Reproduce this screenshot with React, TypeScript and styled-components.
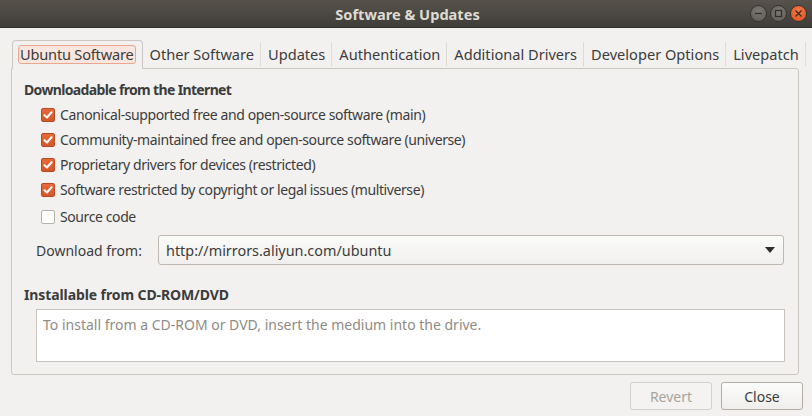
import React from "react";
import styled, { createGlobalStyle, css } from "styled-components";

const Global = createGlobalStyle`
  html, body { margin: 0; padding: 0; background: #f2f1f0; }
  body { font-family: "Noto Sans", "Open Sans", sans-serif; font-size: 14px; color: #3c3c3c; }
  * { box-sizing: border-box; }
`;

const Window = styled.div`
  width: 812px;
  height: 416px;
  display: flex;
  flex-direction: column;
  background: #f2f1f0;
  overflow: hidden;
`;

const TitleBar = styled.div`
  height: 28px;
  flex: none;
  position: relative;
  display: flex;
  align-items: center;
  justify-content: center;
  background: linear-gradient(#57534c, #3f3d38);
  border-bottom: 1px solid #2f2e2a;
`;

const Title = styled.div`
  color: #dfdbd2;
  font-weight: bold;
  font-size: 14.6px;
  margin-left: 3px;
`;

const WinButtons = styled.div`
  position: absolute;
  right: 5px;
  top: 5px;
  display: flex;
  gap: 3px;
`;

const WinBtn = styled.div<{ $close?: boolean }>`
  width: 17px;
  height: 17px;
  border-radius: 50%;
  display: flex;
  align-items: center;
  justify-content: center;
  border: 1px solid #35332f;
  background: ${(p) =>
    p.$close
      ? "radial-gradient(circle at 50% 35%, #f37a4a, #e14f1c)"
      : "radial-gradient(circle at 50% 35%, #7c7871, #5d5a54)"};
`;

const Body = styled.div`
  flex: 1;
  display: flex;
  flex-direction: column;
  padding: 12px 12px 6px 11px;
`;

const TabStrip = styled.div`
  display: flex;
  height: 28px;
  margin-left: 1px;
  align-items: stretch;
  font-size: 14.6px;
`;

const Tab = styled.div<{ $active?: boolean }>`
  display: flex;
  align-items: center;
  padding: 0 7px;
  white-space: nowrap;
  color: #3c3c3c;
  position: relative;
  ${(p) =>
    p.$active
      ? css`
          border: 1px solid #cdc7c2;
          border-bottom: none;
          border-radius: 4px 4px 0 0;
          background: #f2f1f0;
          margin-bottom: -1px;
          padding: 0 6px 1px 5px;
          z-index: 1;
        `
      : css`
          &::after {
            content: "";
            position: absolute;
            right: 0;
            top: 2px;
            bottom: 2px;
            width: 1px;
            background: #dedad6;
          }
        `}
`;

const Focus = styled.span`
  border: 1px solid #eba68e;
  background: #f8e6df;
  border-radius: 3px;
  padding: 0 1px 1px 1px;
  line-height: 16px;
  letter-spacing: -0.2px;
`;

const Notebook = styled.div`
  flex: none;
  height: 307px;
  width: 788px;
  border: 1px solid #cdc7c2;
  border-radius: 0 3px 3px 3px;
  display: flex;
  flex-direction: column;
  padding: 9px 12px 12px 12px;
`;

const Heading = styled.div<{ $tight?: boolean }>`
  font-weight: bold;
  height: 24px;
  display: flex;
  align-items: center;
  color: #3c3c3c;
  letter-spacing: ${(p) => (p.$tight ? "-0.65px" : "-0.1px")};
`;

const CheckList = styled.div`
  display: flex;
  flex-direction: column;
  padding-left: 17px;
  padding-top: 1px;
`;

const CheckRow = styled.label<{ $last?: boolean }>`
  display: flex;
  align-items: center;
  gap: 5px;
  height: 25px;
  letter-spacing: -0.4px;
  ${(p) =>
    p.$last &&
    css`
      height: 27px;
      padding-top: 2px;
    `}
`;

const Box = styled.span<{ $on?: boolean }>`
  width: 14px;
  height: 14px;
  border-radius: 2px;
  display: flex;
  align-items: center;
  justify-content: center;
  flex: none;
  ${(p) =>
    p.$on
      ? css`
          background: linear-gradient(#e66a3a, #d4572a);
          border: 1px solid #b8481f;
        `
      : css`
          background: #fff;
          border: 1px solid #b6b0a9;
        `}
`;

const DownloadRow = styled.div`
  display: flex;
  align-items: center;
  margin-top: 6px;
  padding-left: 12px;
  height: 30px;
  gap: 12px;
`;

const Label = styled.span`
  width: 110px;
  flex: none;
`;

const Combo = styled.div`
  flex: 1;
  height: 30px;
  border: 1px solid #bfb8b1;
  border-radius: 3px;
  background: linear-gradient(#fbfbfa, #f0efee);
  display: flex;
  align-items: center;
  justify-content: space-between;
  padding: 0 8px 0 7px;
  margin-right: 2px;
  font-size: 14.4px;
`;

const Heading2 = styled(Heading)`
  margin-top: 17px;
`;

const InfoBox = styled.div`
  margin: 3px 1px 0 12px;
  height: 54px;
  background: #fff;
  border: 1px solid #c9c3bd;
  padding: 5px 6px;
  color: #8f8b86;
`;

const ButtonBar = styled.div`
  display: flex;
  justify-content: flex-end;
  gap: 9px;
  margin-top: 7px;
  margin-right: -3px;
`;

const Button = styled.button<{ $disabled?: boolean }>`
  width: 82px;
  height: 28px;
  border-radius: 3px;
  font-family: inherit;
  font-size: 14px;
  padding: 0;
  ${(p) =>
    p.$disabled
      ? css`
          border: 1px solid #d5d0cc;
          background: #f4f3f2;
          color: #a8a39d;
        `
      : css`
          border: 1px solid #b3ada6;
          background: linear-gradient(#fcfcfc, #efeeec);
          color: #3c3c3c;
        `}
`;

const Check = () => (
  <svg width="10" height="10" viewBox="0 0 10 10">
    <path d="M1.5 5.2 L4 7.5 L8.6 2.2" fill="none" stroke="#fff" strokeWidth="2" strokeLinecap="round" strokeLinejoin="round" />
  </svg>
);

const items: { text: string; on: boolean }[] = [
  { text: "Canonical-supported free and open-source software (main)", on: true },
  { text: "Community-maintained free and open-source software (universe)", on: true },
  { text: "Proprietary drivers for devices (restricted)", on: true },
  { text: "Software restricted by copyright or legal issues (multiverse)", on: true },
  { text: "Source code", on: false },
];

export default function App() {
  return (
    <>
      <Global />
      <Window>
        <TitleBar>
          <Title>Software &amp; Updates</Title>
          <WinButtons>
            <WinBtn>
              <svg width="9" height="9" viewBox="0 0 9 9">
                <path d="M1 4.5 H8" stroke="#2f2e2a" strokeWidth="1.3" />
              </svg>
            </WinBtn>
            <WinBtn>
              <svg width="9" height="9" viewBox="0 0 9 9">
                <rect x="1.5" y="1.5" width="6" height="6" fill="none" stroke="#2f2e2a" strokeWidth="1.2" />
              </svg>
            </WinBtn>
            <WinBtn $close>
              <svg width="9" height="9" viewBox="0 0 9 9">
                <path d="M1.5 1.5 L7.5 7.5 M7.5 1.5 L1.5 7.5" stroke="#3a2a22" strokeWidth="1.3" />
              </svg>
            </WinBtn>
          </WinButtons>
        </TitleBar>
        <Body>
          <TabStrip>
            <Tab $active>
              <Focus>Ubuntu Software</Focus>
            </Tab>
            <Tab>Other Software</Tab>
            <Tab>Updates</Tab>
            <Tab>Authentication</Tab>
            <Tab>Additional Drivers</Tab>
            <Tab>Developer Options</Tab>
            <Tab>Livepatch</Tab>
          </TabStrip>
          <Notebook>
            <Heading $tight>Downloadable from the Internet</Heading>
            <CheckList>
              {items.map((it, i) => (
                <CheckRow key={it.text} $last={i === items.length - 1}>
                  <Box $on={it.on}>{it.on && <Check />}</Box>
                  <span>{it.text}</span>
                </CheckRow>
              ))}
            </CheckList>
            <DownloadRow>
              <Label>Download from:</Label>
              <Combo>
                <span>http://mirrors.aliyun.com/ubuntu</span>
                <svg width="10" height="6" viewBox="0 0 10 6">
                  <path d="M0 0 H10 L5 6 Z" fill="#2e2e2e" />
                </svg>
              </Combo>
            </DownloadRow>
            <Heading2>Installable from CD-ROM/DVD</Heading2>
            <InfoBox>To install from a CD-ROM or DVD, insert the medium into the drive.</InfoBox>
          </Notebook>
          <ButtonBar>
            <Button $disabled>Revert</Button>
            <Button>Close</Button>
          </ButtonBar>
        </Body>
      </Window>
    </>
  );
}
